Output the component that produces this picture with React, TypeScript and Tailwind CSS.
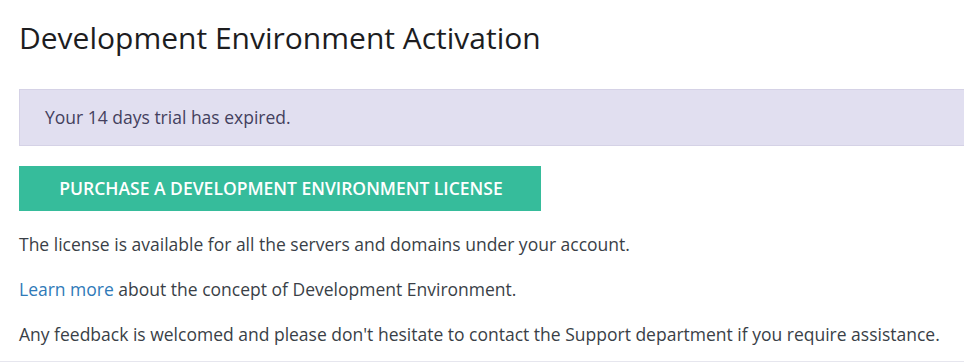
export default function App() {
  return (
    <div className="w-[964px] h-[362px] overflow-hidden bg-white font-['Open_Sans',sans-serif] text-[#3a3f47]">
      <div className="border-b-2 border-[#e6e6ee] pl-[19px] pt-[17px] pb-[14px]">
        <h1 className="text-[30px] leading-[42px] text-[#1d1d1f] font-normal">
          Development Environment Activation
        </h1>

        <div className="mt-[30px] -mr-[2px] h-[57px] flex items-center bg-[#e1dff0] border border-[#d5d2e6] pl-[25px] text-[17.5px] text-[#443f5e]">
          Your 14 days trial has expired.
        </div>

        <button className="mt-[20px] h-[45px] w-[522px] pl-[2px] bg-[#36bc9b] text-white text-[17.5px] font-semibold uppercase">
          Purchase a development environment license
        </button>

        <div className="mt-[21px] flex flex-col gap-[20px] text-[17.5px] leading-[25px]">
          <p>The license is available for all the servers and domains under your account.</p>
          <p>
            <a href="#" className="text-[#2f7ab8]">Learn more</a> about the concept of Development Environment.
          </p>
          <p>
            Any feedback is welcomed and please don't hesitate to contact the Support department if you require assistance.
          </p>
        </div>
      </div>
    </div>
  );
}
